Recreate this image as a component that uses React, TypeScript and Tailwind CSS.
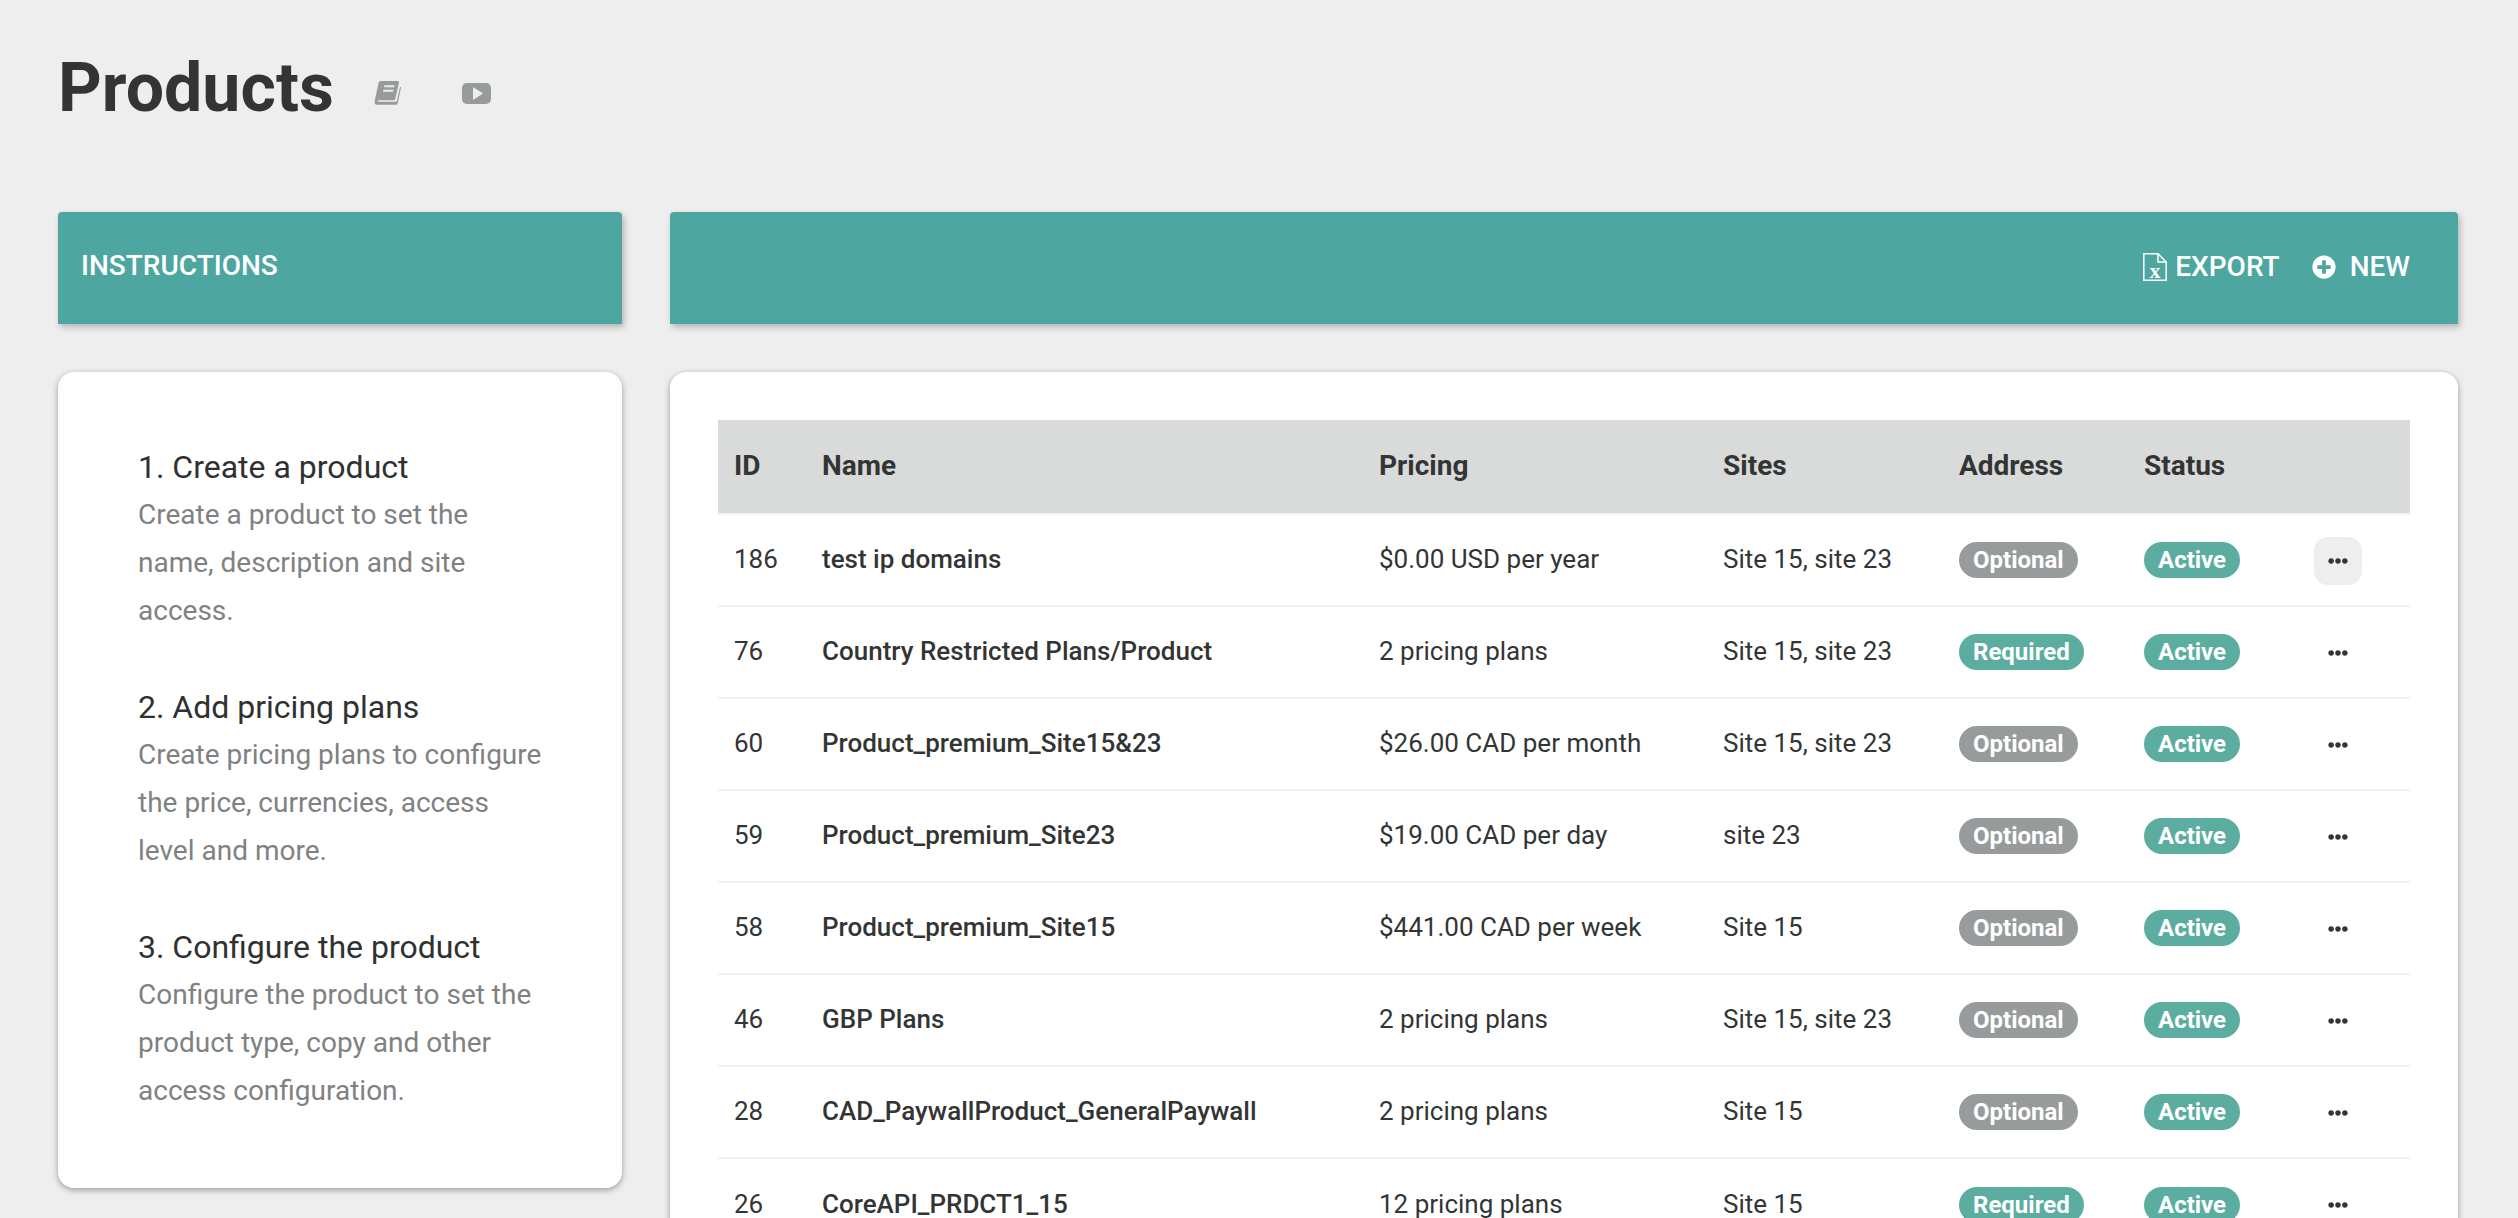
import { FaEllipsisH, FaPlusCircle } from "react-icons/fa";

const rows = [
  { id: 186, name: "test ip domains", pricing: "$0.00 USD per year", sites: "Site 15, site 23", address: "Optional" },
  { id: 76, name: "Country Restricted Plans/Product", pricing: "2 pricing plans", sites: "Site 15, site 23", address: "Required" },
  { id: 60, name: "Product_premium_Site15&23", pricing: "$26.00 CAD per month", sites: "Site 15, site 23", address: "Optional" },
  { id: 59, name: "Product_premium_Site23", pricing: "$19.00 CAD per day", sites: "site 23", address: "Optional" },
  { id: 58, name: "Product_premium_Site15", pricing: "$441.00 CAD per week", sites: "Site 15", address: "Optional" },
  { id: 46, name: "GBP Plans", pricing: "2 pricing plans", sites: "Site 15, site 23", address: "Optional" },
  { id: 28, name: "CAD_PaywallProduct_GeneralPaywall", pricing: "2 pricing plans", sites: "Site 15", address: "Optional" },
  { id: 26, name: "CoreAPI_PRDCT1_15", pricing: "12 pricing plans", sites: "Site 15", address: "Required" },
];

const steps = [
  { title: "1. Create a product", lines: ["Create a product to set the", "name, description and site", "access."] },
  { title: "2. Add pricing plans", lines: ["Create pricing plans to configure", "the price, currencies, access", "level and more."] },
  { title: "3. Configure the product", lines: ["Configure the product to set the", "product type, copy and other", "access configuration."] },
];

function Pill({ label }: { label: string }) {
  const color = label === "Optional" ? "bg-[#979b9b]" : "bg-[#5bad9f]";
  return (
    <span className={`inline-flex h-[36px] items-center rounded-full px-[14px] text-[24px] font-bold text-white ${color}`}>
      {label}
    </span>
  );
}

function BookIcon() {
  return (
    <svg width="27" height="24" viewBox="0 0 28 26" preserveAspectRatio="none" className="text-[#979b9b]">
      <path
        fill="currentColor"
        d="M7 0h17.5c1 0 1.6.8 1.4 1.8L22 19.5c-.2.8-.8 1.3-1.6 1.3H5.5c-1.6 0-2 1.8-.3 1.8h17c.8 0 1.3-.5 1.5-1.2L27 6.5h.6c.3 0 .5.3.4.6l-3.4 16.6c-.2 1.3-1.2 2.1-2.5 2.1H3.6C1.2 25.8.3 24 .7 22L4.7 2.2C5 1 5.9 0 7 0z"
      />
      <path fill="#eeeeee" d="M10.8 4.6h10.4l-.4 2.2H10.4zM9.8 9.4h10.4l-.4 2.2H9.4z" />
    </svg>
  );
}

function PlayIcon() {
  return (
    <svg width="29" height="21" viewBox="0 0 29 21">
      <rect width="29" height="21" rx="5" fill="#979b9b" />
      <path fill="#eeeeee" d="M11 4 21 10.5 11 17z" />
    </svg>
  );
}

function ExcelIcon() {
  return (
    <svg width="24" height="28" viewBox="0 0 24 28" fill="none" stroke="white" strokeWidth="1.5">
      <path d="M.8.8h14.200L23.200 9v18.200H.8z" />
      <path d="M15 .8V9h8.200" />
      <text x="12" y="24.5" textAnchor="middle" fill="white" stroke="none" fontSize="22" fontFamily="Liberation Serif, serif" fontWeight="700">
        x
      </text>
    </svg>
  );
}

export default function App() {
  return (
    <div className="h-[1218px] overflow-hidden bg-[#eeeeee] pl-[58px] pr-[60px] font-['Roboto',sans-serif] text-[#333535]">
      <div className="flex h-[212px] items-start">
        <h1 className="mt-[46px] text-[68px] font-bold leading-[84px]">Products</h1>
        <div className="ml-[40px] mt-[81px] flex items-center gap-[61px]">
          <BookIcon />
          <PlayIcon />
        </div>
      </div>

      <div className="flex items-start gap-[48px]">
        <div className="w-[564px] shrink-0">
          <div className="flex h-[112px] items-center rounded-t-[4px] bg-[#4da6a0] px-[23px] pb-[4px] text-[28px] font-medium text-white shadow-[2px_3px_6px_rgba(0,0,0,0.25)]">
            INSTRUCTIONS
          </div>
          <div className="mt-[48px] flex h-[816px] flex-col gap-[49px] rounded-[16px] bg-white pl-[80px] pr-[40px] pt-[72px] shadow-[0_2px_6px_rgba(0,0,0,0.35)]">
            {steps.map((step) => (
              <div key={step.title}>
                <h3 className="text-[32px] leading-[47px] text-[#2f3131]">{step.title}</h3>
                {step.lines.map((line) => (
                  <p key={line} className="text-[28px] leading-[48px] text-[#808282]">
                    {line}
                  </p>
                ))}
              </div>
            ))}
          </div>
        </div>

        <div className="min-w-0 flex-1">
          <div className="flex h-[112px] items-center justify-end rounded-t-[4px] bg-[#4da6a0] px-[48px] pb-[2px] text-[28px] font-medium text-white shadow-[2px_3px_6px_rgba(0,0,0,0.25)]">
            <ExcelIcon />
            <span className="ml-[8px]">EXPORT</span>
            <FaPlusCircle className="ml-[32px] text-[24px]" />
            <span className="ml-[14px]">NEW</span>
          </div>
          <div className="mt-[48px] rounded-[16px] bg-white p-[48px] shadow-[0_2px_6px_rgba(0,0,0,0.35)]">
            <table className="w-full table-fixed border-collapse text-left text-[26px]">
              <colgroup>
                <col className="w-[88px]" />
                <col className="w-[557px]" />
                <col className="w-[344px]" />
                <col className="w-[236px]" />
                <col className="w-[185px]" />
                <col className="w-[170px]" />
                <col />
              </colgroup>
              <thead>
                <tr className="h-[94px] bg-[#d9dbda] text-[28px] font-bold">
                  <th className="px-[16px] pb-[2px]">ID</th>
                  <th className="px-[16px] pb-[2px]">Name</th>
                  <th className="px-[16px] pb-[2px]">Pricing</th>
                  <th className="px-[16px] pb-[2px]">Sites</th>
                  <th className="px-[16px] pb-[2px]">Address</th>
                  <th className="px-[16px] pb-[2px]">Status</th>
                  <th />
                </tr>
              </thead>
              <tbody>
                {rows.map((row, i) => (
                  <tr key={row.id} className="h-[92px] border-t-[2px] border-[#f2f2f2]">
                    <td className="px-[16px] pb-[1px]">{row.id}</td>
                    <td className="px-[16px] pb-[1px] font-medium">{row.name}</td>
                    <td className="px-[16px] pb-[1px]">{row.pricing}</td>
                    <td className="px-[16px] pb-[1px]">{row.sites}</td>
                    <td className="px-[16px] pb-[1px]">
                      <Pill label={row.address} />
                    </td>
                    <td className="px-[16px] pb-[1px]">
                      <Pill label="Active" />
                    </td>
                    <td className="px-[16px] pt-[1px]">
                      <button className={`flex h-[48px] w-[48px] items-center justify-center rounded-[14px] ${i === 0 ? "bg-[#eeeeee]" : ""}`}>
                        <FaEllipsisH className="text-[20px] text-[#333535]" />
                      </button>
                    </td>
                  </tr>
                ))}
              </tbody>
            </table>
          </div>
        </div>
      </div>
    </div>
  );
}
